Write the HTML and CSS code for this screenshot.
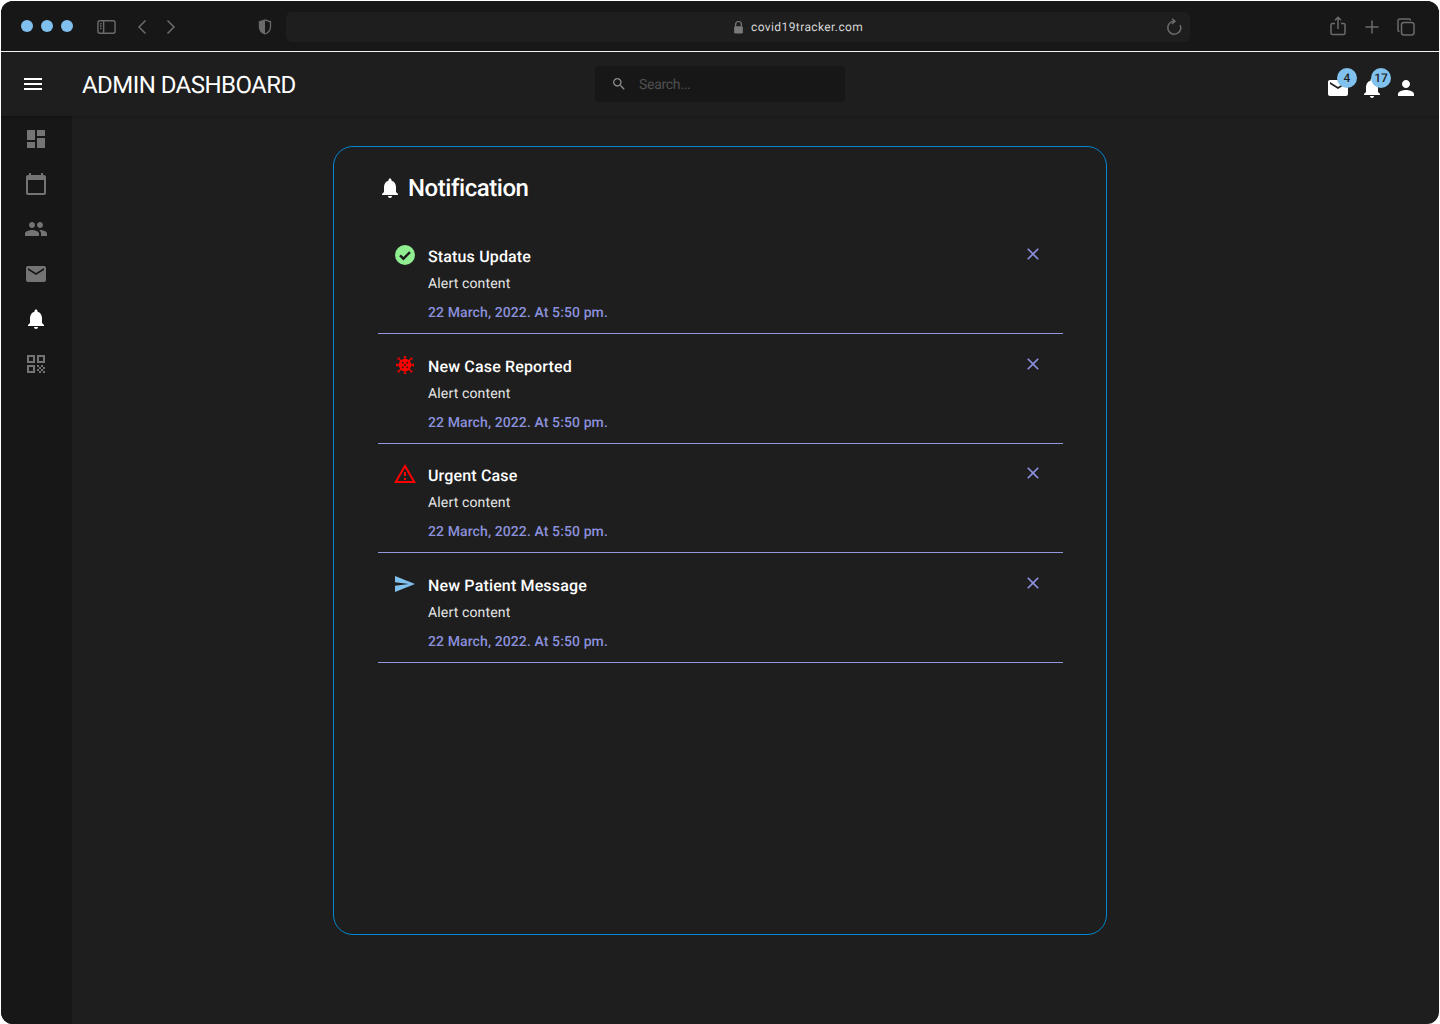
FILE: index.html
```html
<!DOCTYPE html>
<html lang="en">
    <head>
        <meta charset="UTF-8" />
        <meta name="viewport" content="width=device-width, initial-scale=1.0" />
        <title>Admin Dashboard</title>
        <link rel="stylesheet" href="styles.css">
    </head>
    <body>
        <svg class="sprite" xmlns="http://www.w3.org/2000/svg">
            <symbol id="i-bell" viewBox="0 0 24 24"><path d="M12 22c1.1 0 2-.9 2-2h-4c0 1.1.89 2 2 2zm6-6v-5c0-3.07-1.64-5.64-4.5-6.32V4c0-.83-.67-1.5-1.5-1.5s-1.5.67-1.5 1.5v.68C7.63 5.36 6 7.92 6 11v5l-2 2v1h16v-1l-2-2z"/></symbol>
            <symbol id="i-mail" viewBox="0 0 24 24"><path d="M20 4H4c-1.1 0-1.99.9-1.99 2L2 18c0 1.1.9 2 2 2h16c1.1 0 2-.9 2-2V6c0-1.1-.9-2-2-2zm0 4l-8 5-8-5V6l8 5 8-5v2z"/></symbol>
            <symbol id="i-close" viewBox="0 0 24 24"><path d="M19 6.41L17.59 5 12 10.59 6.41 5 5 6.41 10.59 12 5 17.59 6.41 19 12 13.41 17.59 19 19 17.59 13.41 12z"/></symbol>
        </svg>

        <div class="window">
            <div class="browser-bar">
                <div class="dots"><i></i><i></i><i></i></div>
                <svg class="chrome-icon panel-icon" viewBox="0 0 20 16"><rect x="1" y="1.5" width="18" height="13" rx="2"/><path d="M7 1.5v13M3.2 4.5h1.6M3.2 7h1.6M3.2 9.5h1.6"/></svg>
                <svg class="chrome-icon back-icon" viewBox="0 0 10 16"><path d="M8.5 1.5L2 8l6.500 6.500"/></svg>
                <svg class="chrome-icon forward-icon" viewBox="0 0 10 16"><path d="M1.500 1.500L8 8l-6.500 6.500"/></svg>
                <svg class="chrome-icon shield-icon" viewBox="0 0 14 16"><path d="M7 1L1.500 2.800v5C1.500 11.500 4 14 7 15c3-1 5.500-3.500 5.500-7.200v-5z"/><path class="solid" d="M7 1L1.500 2.800v5C1.500 11.500 4 14 7 15z"/></svg>
                <div class="address">
                    <svg class="lock-icon" viewBox="0 0 12 16"><path d="M2 7V5a4 4 0 0 1 8 0v2H8.600V5a2.600 2.600 0 0 0-5.200 0v2z"/><rect x="1" y="7" width="10" height="8.500" rx="1.500"/></svg>
                    <span>covid19tracker.com</span>
                    <svg class="chrome-icon reload-icon" viewBox="0 0 18 18"><path d="M15.200 7A6.500 6.500 0 1 1 9 3.200"/><path d="M7 .8l3 2.500-3 2.500"/></svg>
                </div>
                <svg class="chrome-icon share-icon" viewBox="0 0 16 20"><path d="M5 7.500H2.500a1.500 1.500 0 0 0-1.500 1.500v8a1.500 1.500 0 0 0 1.500 1.500h11a1.500 1.500 0 0 0 1.500-1.500V9a1.500 1.500 0 0 0-1.500-1.500H11M8 13V1.500M5 4.200L8 1.300l3 2.900"/></svg>
                <svg class="chrome-icon plus-icon" viewBox="0 0 14 14"><path d="M7 .5v13M.5 7h13"/></svg>
                <svg class="chrome-icon tabs-icon" viewBox="0 0 18 18"><rect x="4.500" y="4.500" width="12.500" height="12.500" rx="2.500"/><path d="M13.500 2.500A1.500 1.500 0 0 0 12 1H3a2 2 0 0 0-2 2v9a1.500 1.500 0 0 0 1.500 1.500"/></svg>
            </div>

            <header class="app-bar">
                <svg class="icon menu-icon" viewBox="0 0 24 24"><path d="M3 18h18v-2H3v2zm0-5h18v-2H3v2zm0-7v2h18V6H3z"/></svg>
                <h1>ADMIN DASHBOARD</h1>
                <div class="search">
                    <svg viewBox="0 0 24 24"><path d="M15.500 14h-.79l-.28-.27C15.410 12.590 16 11.110 16 9.500 16 5.910 13.090 3 9.500 3S3 5.910 3 9.500 5.910 16 9.500 16c1.610 0 3.090-.59 4.230-1.570l.27.28v.79l5 4.990L20.490 19l-4.990-5zm-6 0C7.010 14 5 11.990 5 9.500S7.010 5 9.500 5 14 7.010 14 9.500 11.990 14 9.500 14z"/></svg>
                    <span>Search...</span>
                </div>
                <div class="bar-actions">
                    <div class="action">
                        <svg class="icon"><use href="#i-mail"/></svg>
                        <b class="badge">4</b>
                    </div>
                    <div class="action">
                        <svg class="icon"><use href="#i-bell"/></svg>
                        <b class="badge">17</b>
                    </div>
                    <div class="action">
                        <svg class="icon" viewBox="0 0 24 24"><path d="M12 12c2.210 0 4-1.790 4-4s-1.790-4-4-4-4 1.790-4 4 1.790 4 4 4zm0 2c-2.670 0-8 1.340-8 4v2h16v-2c0-2.660-5.330-4-8-4z"/></svg>
                    </div>
                </div>
            </header>

            <div class="content">
                <nav class="side-nav">
                    <a><svg class="icon" viewBox="0 0 24 24"><path d="M3 13h8V3H3v10zm0 8h8v-6H3v6zm10 0h8V11h-8v10zm0-18v6h8V3h-8z"/></svg></a>
                    <a><svg class="icon" viewBox="0 0 24 24"><path d="M20 3h-1V1h-2v2H7V1H5v2H4c-1.100 0-2 .9-2 2v16c0 1.100.9 2 2 2h16c1.100 0 2-.9 2-2V5c0-1.100-.9-2-2-2zm0 18H4V8h16v13z"/></svg></a>
                    <a><svg class="icon" viewBox="0 0 24 24"><path d="M16 11c1.660 0 2.990-1.340 2.990-3S17.660 5 16 5c-1.660 0-3 1.340-3 3s1.340 3 3 3zm-8 0c1.660 0 2.990-1.340 2.990-3S9.660 5 8 5C6.340 5 5 6.340 5 8s1.340 3 3 3zm0 2c-2.330 0-7 1.170-7 3.500V19h14v-2.500c0-2.330-4.670-3.500-7-3.500zm8 0c-.29 0-.62.02-.97.05 1.160.84 1.970 1.970 1.970 3.450V19h6v-2.500c0-2.330-4.670-3.500-7-3.500z"/></svg></a>
                    <a><svg class="icon"><use href="#i-mail"/></svg></a>
                    <a class="active"><svg class="icon"><use href="#i-bell"/></svg></a>
                    <a><svg class="icon" viewBox="0 0 24 24"><path d="M3 11h8V3H3v8zm2-6h4v4H5V5zM3 21h8v-8H3v8zm2-6h4v4H5v-4zM13 3v8h8V3h-8zm6 6h-4V5h4v4zM19 19h2v2h-2zM13 13h2v2h-2zM15 15h2v2h-2zM13 17h2v2h-2zM15 19h2v2h-2zM17 17h2v2h-2zM17 13h2v2h-2zM19 15h2v2h-2z"/></svg></a>
                </nav>

                <main class="main">
                    <section class="card">
                        <h2><svg class="icon"><use href="#i-bell"/></svg>Notification</h2>

                        <article class="alert">
                            <svg class="alert-icon" viewBox="0 0 24 24"><circle cx="12" cy="12" r="10" fill="#90ee90"/><path d="M7 12.300l3.400 3.400 6.600-6.600" fill="none" stroke="#1e1e1e" stroke-width="2.400"/></svg>
                            <div class="alert-body">
                                <h3>Status Update</h3>
                                <p>Alert content</p>
                                <time>22 March, 2022. At 5:50 pm.</time>
                            </div>
                            <svg class="close-icon"><use href="#i-close"/></svg>
                        </article>

                        <article class="alert">
                            <svg class="alert-icon" viewBox="-1 -1 26 26"><g stroke="#f00" stroke-width="1.500"><path d="M12 2.500v19M2.500 12h19M5.300 5.300l13.400 13.400M18.700 5.300L5.300 18.700"/></g><g stroke="#f00" stroke-width="1.200"><path d="M10.500 3h3M10.500 21h3M3 10.500v3M21 10.500v3M3.800 5.800l2-2M18.200 20.200l2-2M18.200 3.800l2 2M3.800 18.200l2 2"/></g><circle cx="12" cy="12" r="6.800" fill="#f00"/><g fill="#1e1e1e"><circle cx="9.500" cy="9.500" r="1"/><circle cx="14.500" cy="9.500" r="1"/><circle cx="9.500" cy="14.500" r="1"/><circle cx="14.500" cy="14.500" r="1"/><circle cx="12" cy="12" r="1"/></g></svg>
                            <div class="alert-body">
                                <h3>New Case Reported</h3>
                                <p>Alert content</p>
                                <time>22 March, 2022. At 5:50 pm.</time>
                            </div>
                            <svg class="close-icon"><use href="#i-close"/></svg>
                        </article>

                        <article class="alert">
                            <svg class="alert-icon" viewBox="0 0 24 24"><path fill="#f00" d="M1 21h22L12 2 1 21zm3.470-2L12 6l7.530 13H4.470zM11 16h2v2h-2zm0-6h2v4h-2z"/></svg>
                            <div class="alert-body">
                                <h3>Urgent Case</h3>
                                <p>Alert content</p>
                                <time>22 March, 2022. At 5:50 pm.</time>
                            </div>
                            <svg class="close-icon"><use href="#i-close"/></svg>
                        </article>

                        <article class="alert">
                            <svg class="alert-icon" viewBox="0 0 24 24"><path fill="#81c1ee" d="M2 20l20-8L2 4v6.300L16 12 2 13.700z"/></svg>
                            <div class="alert-body">
                                <h3>New Patient Message</h3>
                                <p>Alert content</p>
                                <time>22 March, 2022. At 5:50 pm.</time>
                            </div>
                            <svg class="close-icon"><use href="#i-close"/></svg>
                        </article>
                    </section>
                </main>
            </div>
        </div>
    </body>
</html>
```

FILE: styles.css
```css
* {
    box-sizing: border-box;
}

html,
body {
    height: 1024px;
    margin: 0;
    overflow: hidden;
    background-color: #fff;
}

body {
    color: #fff;
    font-family: Roboto, "Liberation Sans", sans-serif;
    text-rendering: geometricPrecision;
}

.sprite {
    display: none;
}

.window {
    display: flex;
    flex-direction: column;
    height: 1023px;
    margin: 1px 1px 0;
    overflow: hidden;
    border-radius: 12px;
    background-color: #1e1e1e;
}

.icon {
    display: block;
    flex: none;
    width: 24px;
    height: 24px;
    fill: currentColor;
}

/* browser toolbar */
.browser-bar {
    display: flex;
    flex: none;
    align-items: center;
    height: 51px;
    padding: 1px 0 0 20px;
    border-bottom: 1px solid #fff;
    background-color: #171717;
}

.dots {
    display: flex;
    gap: 8px;
    margin-bottom: 2px;
}

.dots i {
    width: 12px;
    height: 12px;
    border-radius: 50%;
    background-color: #7fc0ee;
}

.chrome-icon {
    display: block;
    flex: none;
    fill: none;
    stroke: #6b6b6b;
    stroke-width: 1.5;
}

.panel-icon {
    width: 19px;
    height: 16px;
    margin-left: 24px;
}

.back-icon {
    width: 10px;
    height: 16px;
    margin-left: 21px;
}

.forward-icon {
    width: 10px;
    height: 16px;
    margin-left: 19px;
}

.shield-icon {
    width: 14px;
    height: 16px;
    margin-left: 82px;
    stroke-width: 1.3;
}

.shield-icon .solid {
    fill: #6b6b6b;
    stroke: none;
}

.address {
    display: flex;
    align-items: center;
    width: 904px;
    height: 30px;
    margin-left: 14px;
    padding: 0 7px 0 447px;
    border-radius: 6px;
    background-color: #1e1e1e;
    color: #d6d6d6;
    font-size: 12px;
    letter-spacing: 0.4px;
}

.lock-icon {
    width: 11px;
    height: 14px;
    margin-right: 7px;
    fill: #7a7a7a;
}

.reload-icon {
    width: 18px;
    height: 18px;
    margin-left: auto;
}

.share-icon {
    width: 16px;
    height: 20px;
    margin-left: 140px;
    margin-bottom: 2px;
}

.plus-icon {
    width: 14px;
    height: 14px;
    margin-left: 19px;
}

.tabs-icon {
    width: 18px;
    height: 18px;
    margin-left: 18px;
}

/* app bar */
.app-bar {
    position: relative;
    z-index: 1;
    display: flex;
    flex: none;
    align-items: center;
    height: 64px;
    padding: 0 21px 0 20px;
    background-color: #1e1e1e;
    box-shadow: 0 1px 3px rgba(0, 0, 0, 0.25);
}

.app-bar h1 {
    width: 513px;
    margin: 2px 0 0 37px;
    font-size: 24px;
    font-weight: 400;
    line-height: 32px;
    letter-spacing: -0.55px;
}

.search {
    display: flex;
    align-items: center;
    width: 250px;
    height: 36px;
    padding-left: 16px;
    border-radius: 4px;
    background-color: #171717;
    color: #4f4f4f;
    font-size: 14px;
    letter-spacing: -0.3px;
}

.search span {
    padding-top: 2px;
}

.search svg {
    width: 16px;
    height: 16px;
    margin-right: 12px;
    fill: #8a8a8a;
}

.bar-actions {
    display: flex;
    gap: 10px;
    margin-left: auto;
    padding-top: 8px;
}

.action {
    position: relative;
}

.badge {
    position: absolute;
    top: -8px;
    left: 11px;
    min-width: 20px;
    height: 20px;
    border-radius: 10px;
    background-color: #81c1ee;
    color: #1e1e1e;
    font-size: 12px;
    font-weight: 500;
    line-height: 20px;
    text-align: center;
}

/* left nav */
.content {
    display: flex;
    flex: 1;
    min-height: 0;
}

.side-nav {
    flex: none;
    width: 71px;
    padding-right: 1px;
    background-color: #171717;
}

.side-nav a {
    display: flex;
    align-items: center;
    justify-content: center;
    height: 45px;
    color: #747474;
}

.side-nav a.active {
    color: #fff;
}

/* notification card */
.main {
    flex: 1;
    padding: 30px 0 0 261px;
}

.card {
    width: 774px;
    height: 789px;
    padding: 24px 43px 0 44px;
    border: 1px solid #0288d1;
    border-radius: 20px;
}

.card h2 {
    display: flex;
    align-items: center;
    gap: 6px;
    height: 34px;
    margin: 0 0 19.4px;
    font-size: 24px;
    font-weight: 500;
    line-height: 34px;
    letter-spacing: -0.45px;
}

.alert {
    display: flex;
    align-items: flex-start;
    height: 109.6px;
    padding: 20.8px 20px 0 15px;
    border-bottom: 1px solid #9497dc;
}

.alert-icon {
    flex: none;
    width: 24px;
    height: 24px;
    margin-top: -2px;
}

.alert-body {
    flex: 1;
    margin-left: 11px;
}

.alert-body h3 {
    margin: 0;
    font-size: 16px;
    font-weight: 500;
    line-height: 24px;
    letter-spacing: 0.15px;
}

.alert-body p {
    margin: 5px 0 0;
    color: #e6e6e6;
    font-size: 14px;
    line-height: 20px;
    letter-spacing: 0.15px;
}

.alert-body time {
    display: block;
    margin-top: 9px;
    color: #8b90dc;
    font-size: 14px;
    font-weight: 500;
    line-height: 20px;
    letter-spacing: 0.1px;
}

.close-icon {
    flex: none;
    width: 20px;
    height: 20px;
    margin-top: -1px;
    fill: #8b90dc;
}
```
